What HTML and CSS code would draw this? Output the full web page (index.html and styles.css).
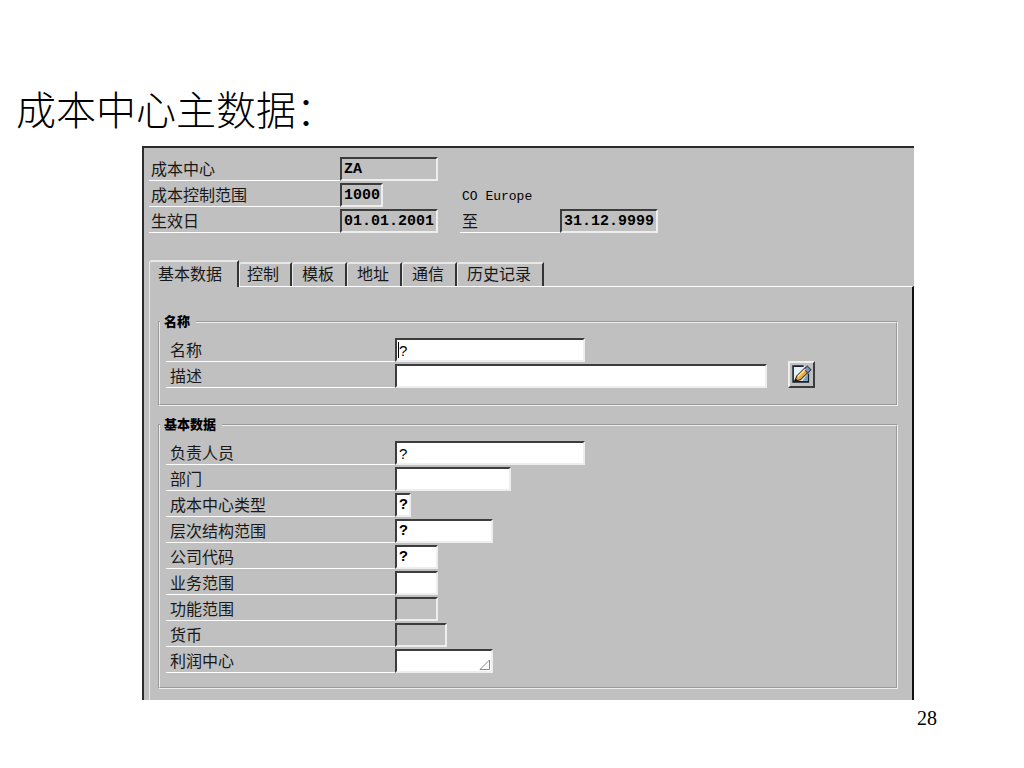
FILE: index.html
```html
<!DOCTYPE html>
<html lang="zh-CN">
<head>
<meta charset="utf-8">
<title>成本中心主数据</title>
<link rel="stylesheet" href="styles.css">
</head>
<body>
<main class="slide">
  <h1 class="title">成本中心主数据：</h1>
  <form class="window">
    <div class="header">
      <div class="row"><label class="label" for="cc">成本中心</label><input class="field code w10" id="cc" value="ZA" readonly></div>
      <div class="row"><label class="label" for="area">成本控制范围</label><div class="slot"><input class="field code w4" id="area" value="1000" readonly></div><span class="note">CO Europe</span></div>
      <div class="row"><label class="label" for="from">生效日</label><div class="slot"><input class="field code w10" id="from" value="01.01.2001" readonly></div><label class="label label-to" for="to">至</label><input class="field code w10" id="to" value="31.12.9999" readonly></div>
    </div>
    <div class="tabs" role="tablist">
      <button class="tab tab-active" type="button" role="tab" aria-selected="true">基本数据</button>
      <button class="tab tab-next" type="button" role="tab">控制</button>
      <button class="tab" type="button" role="tab">模板</button>
      <button class="tab" type="button" role="tab">地址</button>
      <button class="tab" type="button" role="tab">通信</button>
      <button class="tab" type="button" role="tab">历史记录</button>
    </div>
    <div class="panel">
      <section class="group" aria-labelledby="g1">
        <h2 class="legend" id="g1">名称</h2>
        <div class="row"><label class="label" for="name">名称</label><div class="slot slot-caret"><input class="field edit text w20" id="name" value="?"></div></div>
        <div class="row"><label class="label" for="desc">描述</label><input class="field edit text w40" id="desc">
          <button class="edit-button" type="button" aria-label="编辑">
            <svg width="21" height="21" viewBox="0 0 20 20">
              <path d="M2 2h15v15H2z" fill="#e3f1f8"/>
              <path d="M16.500 9v8H2V2H12" fill="none" stroke="#17202c" stroke-width="1.500"/>
              <path d="M11 16l5-7v7z" fill="#6fa3bd"/>
              <path d="M3.500 16.500l2-5L14 3l4 3-9 9z" fill="#f2ae3a" stroke="#352719"/>
              <path d="M12.500 5l3-3 3.500 3.500-3 3z" fill="#8295b5" stroke="#394660"/>
              <path d="M6.500 12l7-7" stroke="#ffe29a" stroke-width="1.500"/>
              <path d="M3 17l1-3.500 2.500 2z" fill="#111"/>
            </svg>
          </button>
        </div>
      </section>
      <section class="group group-last" aria-labelledby="g2">
        <h2 class="legend" id="g2">基本数据</h2>
        <div class="row"><label class="label" for="owner">负责人员</label><input class="field edit text w20" id="owner" value="?"></div>
        <div class="row"><label class="label" for="dept">部门</label><input class="field edit w12" id="dept"></div>
        <div class="row"><label class="label" for="type">成本中心类型</label><input class="field edit code w1" id="type" value="?"></div>
        <div class="row"><label class="label" for="hier">层次结构范围</label><input class="field edit code w10" id="hier" value="?"></div>
        <div class="row"><label class="label" for="company">公司代码</label><input class="field edit code w4" id="company" value="?"></div>
        <div class="row"><label class="label" for="business">业务范围</label><input class="field edit w4" id="business"></div>
        <div class="row"><label class="label" for="func">功能范围</label><input class="field w4" id="func" readonly></div>
        <div class="row"><label class="label" for="currency">货币</label><input class="field w5" id="currency" readonly></div>
        <div class="row"><label class="label" for="profit">利润中心</label><div class="slot"><input class="field edit w10" id="profit"><svg class="corner" width="12" height="12" viewBox="0 0 12 12"><path d="M1 10.500H10.500V1z" fill="#fff" stroke="#888"/></svg></div></div>
      </section>
    </div>
  </form>
  <footer class="page-number">28</footer>
</main>
</body>
</html>
```
FILE: styles.css
```css
* {
  box-sizing: border-box;
}

body {
  margin: 0;
  background: #fff;
  color: #000;
  font-family: "Noto Sans CJK SC", sans-serif;
}

.slide {
  padding-top: 78px;
}

.title {
  margin: 0;
  padding-left: 16px;
  font-size: 40px;
  font-weight: 300;
  line-height: 60px;
}

.window {
  margin: 8px 110px 0 142px;
  padding: 7px 0 0 5px;
  background: #c0c0c0;
  border-top: 2px solid #2c2c2c;
  border-left: 2px solid #2c2c2c;
}

.row {
  display: flex;
  align-items: flex-end;
  height: 26px;
}

.label {
  flex: none;
  width: 191px;
  height: 24px;
  padding-left: 2px;
  border-bottom: 1px solid #fff;
  color: #181818;
  font-size: 16px;
  line-height: 22px;
}

.label-to {
  width: 100px;
}

.slot {
  position: relative;
  display: flex;
}

.header .slot {
  width: 120px;
}

.note {
  padding-left: 2px;
  font-family: "Liberation Mono", monospace;
  font-size: 13px;
  line-height: 20px;
}

.field {
  flex: none;
  height: 24px;
  margin: 0;
  padding: 0 0 0 3px;
  background: #c0c0c0;
  border: 2px solid;
  border-color: #3c3c3c #eee #eee #3c3c3c;
  border-radius: 0;
  outline: none;
  color: #000;
  font-size: 15px;
}

.edit {
  background: #fff;
}

.code {
  font-family: "Liberation Mono", monospace;
  font-weight: bold;
}

.text {
  font-family: "Liberation Sans", sans-serif;
}

.w1 { width: 16px; padding-left: 2px; }
.w4 { width: 43px; padding-left: 2px; }
.w5 { width: 52px; }
.w10 { width: 98px; padding-left: 2px; }
.w12 { width: 116px; }
.w20 { width: 190px; padding-left: 2px; }
.w40 { width: 372px; }

.tabs {
  display: flex;
  align-items: flex-end;
  margin-top: 27px;
}

.tab {
  height: 24px;
  padding: 0 11px 4px 9px;
  background: #c0c0c0;
  border: 0;
  border-top: 2px solid #e8e8e8;
  border-left: 1px solid #e8e8e8;
  border-right: 2px solid #333;
  border-radius: 3px 0 0 0;
  color: #181818;
  font-family: inherit;
  font-size: 16px;
  line-height: 18px;
}

.tab-next {
  padding-left: 7px;
}

.tab-active {
  position: relative;
  z-index: 1;
  height: 27px;
  margin-bottom: -1px;
  padding: 0 15px 4px 8px;
  line-height: 20px;
}

.panel {
  padding: 25px 14px 11px 8px;
  border-top: 1px solid #fff;
  border-left: 1px solid #e8e8e8;
  border-right: 2px solid #111;
}

.group {
  position: relative;
  margin-top: 9px;
  padding: 13px 0 16px 6px;
  border: 2px groove #eee;
}

.group-last {
  margin-top: 18px;
  padding-bottom: 14px;
}

.group .label {
  width: 229px;
  padding-left: 4px;
}

.legend {
  position: absolute;
  top: -12px;
  left: 0;
  margin: 0;
  padding: 0 6px 0 4px;
  background: #c0c0c0;
  font-family: "Noto Sans CJK SC", sans-serif;
  font-size: 13px;
  font-weight: 900;
  line-height: 20px;
}

.slot-caret::before {
  content: "";
  position: absolute;
  top: 4px;
  left: 3px;
  width: 1px;
  height: 16px;
  background: #000;
}

.edit-button {
  display: flex;
  align-items: center;
  justify-content: center;
  width: 27px;
  height: 27px;
  margin-left: 21px;
  padding: 0;
  background: #c0c0c0;
  border: 2px solid;
  border-color: #eee #3c3c3c #3c3c3c #eee;
}

.corner {
  position: absolute;
  right: 2px;
  bottom: 2px;
}

.page-number {
  padding-right: 87px;
  font-family: "Liberation Serif", serif;
  font-size: 20px;
  line-height: 36px;
  text-align: right;
}
```
